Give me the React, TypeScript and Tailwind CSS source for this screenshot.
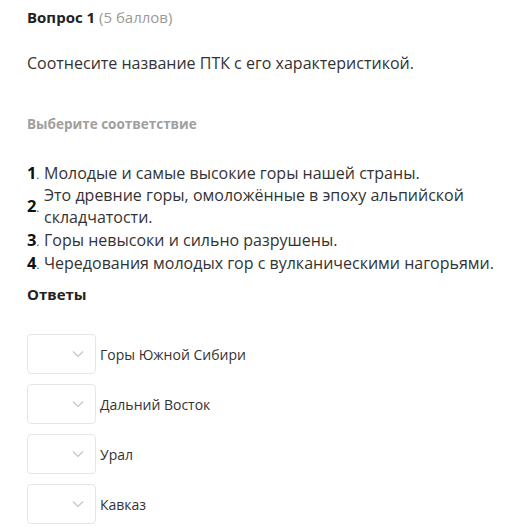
import React from 'react';

const items = [
  'Молодые и самые высокие горы нашей страны.',
  'Это древние горы, омоложённые в эпоху альпийской складчатости.',
  'Горы невысоки и сильно разрушены.',
  'Чередования молодых гор с вулканическими нагорьями.',
];

const answers = ['Горы Южной Сибири', 'Дальний Восток', 'Урал', 'Кавказ'];

const Chevron = () => (
  <svg width="12" height="8" viewBox="0 0 12 8" fill="none" className="text-[#c4c4c4]">
    <path d="M1 1.5l5 5 5-5" stroke="currentColor" strokeWidth="1.2" />
  </svg>
);

export default function App() {
  return (
    <div className="min-h-screen bg-white pl-[27px] pr-[10px] pt-[7px] text-[#333] font-['Open_Sans',sans-serif]">
      <div className="text-[15px] leading-[20px]">
        <span className="font-bold text-[#222]">Вопрос 1</span>{' '}
        <span className="text-[#999]">(5 баллов)</span>
      </div>

      <p className="mt-[25px] text-[16px] leading-[22px]">Соотнесите название ПТК с его характеристикой.</p>

      <p className="mt-[40px] text-[13.5px] leading-[20px] font-bold text-[#a0a0a0]">Выберите соответствие</p>

      <ol className="mt-[27px] flex flex-col">
        {items.map((t, i) => (
          <li key={i} className="flex items-center text-[16px] leading-[22px] min-h-[23px]">
            <span className="shrink-0 w-[17px] font-bold text-[#111] text-[16.5px] leading-[22px]">
              {i + 1}
              <span className="font-normal text-[10px] leading-none">.</span>
            </span>
            <span className="max-w-[450px]">{t}</span>
          </li>
        ))}
      </ol>

      <p className="mt-[10px] text-[15px] leading-[20px] font-bold text-[#222]">Ответы</p>

      <div className="mt-[30px] flex flex-col gap-[10px]">
        {answers.map((a) => (
          <div key={a} className="flex items-center gap-[4px]">
            <div className="w-[69px] h-[40px] rounded-[4px] border border-[#e6e6e6] flex items-center justify-end pr-[11px]">
              <Chevron />
            </div>
            <span className="text-[14px] text-[#333]">{a}</span>
          </div>
        ))}
      </div>
    </div>
  );
}
